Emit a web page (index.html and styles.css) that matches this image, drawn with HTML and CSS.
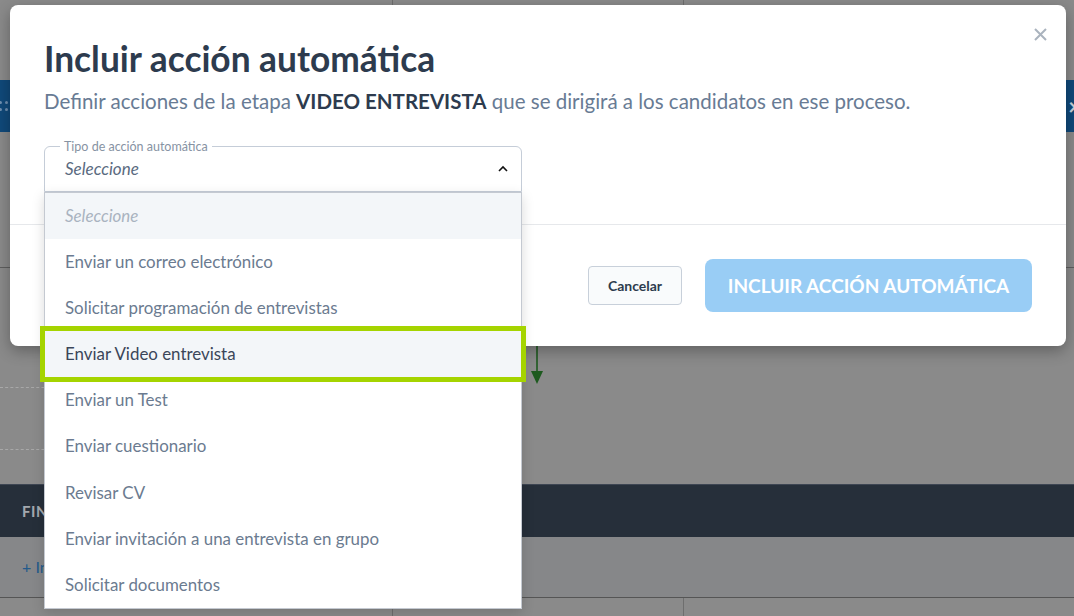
FILE: index.html
```html
<!DOCTYPE html>
<html lang="es">
<head>
    <meta charset="UTF-8">
    <title>Incluir acción automática</title>
    <link rel="stylesheet" href="styles.css">
</head>
<body>
    <div class="page">
        <div class="cols top-strip">
            <div></div><div></div><div></div>
        </div>
        <div class="stage-bar">
            <span class="handle"><i></i><i></i><i></i><i></i><i></i><i></i></span>
            <span class="bar-close">&times;</span>
        </div>
        <div class="canvas">
            <div class="flow-line"></div>
            <div class="dash first"></div>
            <div class="dash"></div>
            <svg class="arrow" width="14" height="60" viewBox="0 0 14 60">
                <line x1="7" y1="0" x2="7" y2="46" stroke="#1d5a1f" stroke-width="1.6"/>
                <polygon points="1,43 13,43 7,56" fill="#1d5a1f"/>
            </svg>
        </div>
        <div class="dark-band">FINALIZADOS</div>
        <div class="actions-row">+ Incluir acción</div>
        <div class="cols bottom-row">
            <div></div><div></div><div></div>
        </div>
    </div>

    <div class="modal">
        <button class="modal-close" aria-label="Cerrar">
            <svg width="13" height="13" viewBox="0 0 13 13">
                <path d="M1 1L12 12M12 1L1 12" stroke="#aab3be" stroke-width="2" fill="none"/>
            </svg>
        </button>
        <div class="modal-body">
            <h1>Incluir acción automática</h1>
            <p class="lead">Definir acciones de la etapa <b>VIDEO ENTREVISTA</b> que se dirigirá a los candidatos en ese proceso.</p>

            <div class="select">
                <fieldset class="select-box">
                    <legend>Tipo de acción automática</legend>
                    <span class="select-value">Seleccione</span>
                    <svg class="chevron" width="10" height="7" viewBox="0 0 10 7">
                        <path d="M1 6L5 2L9 6" stroke="#111" stroke-width="1.6" fill="none"/>
                    </svg>
                </fieldset>
                <ul class="options">
                    <li class="placeholder">Seleccione</li>
                    <li>Enviar un correo electrónico</li>
                    <li>Solicitar programación de entrevistas</li>
                    <li class="marked">Enviar Video entrevista</li>
                    <li>Enviar un Test</li>
                    <li>Enviar cuestionario</li>
                    <li>Revisar CV</li>
                    <li>Enviar invitación a una entrevista en grupo</li>
                    <li>Solicitar documentos</li>
                </ul>
            </div>
        </div>
        <div class="modal-footer">
            <button class="btn-cancel">Cancelar</button>
            <button class="btn-primary">INCLUIR ACCIÓN AUTOMÁTICA</button>
        </div>
    </div>
</body>
</html>
```

FILE: styles.css
```css
body {
    margin: 0;
    width: 1074px;
    height: 616px;
    overflow: hidden;
    position: relative;
    background: #8a8a8a;
    font-family: Lato, "Open Sans", sans-serif;
}
.cols {
    display: grid;
    grid-template-columns: 392px 291px 1fr;
}
.cols div + div {
    border-left: 1px solid #6e6e6e;
}
.top-strip {
    height: 80px;
}
.stage-bar {
    height: 52px;
    background: #10497a;
    display: flex;
    justify-content: space-between;
    align-items: center;
}
.handle {
    display: grid;
    grid-template-columns: repeat(3, 3px);
    gap: 4px 3px;
    margin-left: -1px;
}
.handle i {
    width: 3px;
    height: 3px;
    border-radius: 50%;
    background: #6f8fb0;
}
.bar-close {
    color: #c9d3dd;
    font-size: 22px;
    font-weight: bold;
    margin-right: -7px;
}
.canvas {
    height: 352px;
    box-sizing: border-box;
    padding-top: 135px;
    position: relative;
}
.flow-line {
    border-top: 1px solid #5e5e5e;
}
.dash {
    width: 60px;
    margin-top: 61px;
    border-top: 1px dashed #a8a8a8;
}
.dash.first {
    margin-top: 119px;
}
.arrow {
    position: absolute;
    left: 530px;
    top: 196px;
}
.dark-band {
    height: 52px;
    line-height: 52px;
    background: #262f3a;
    border-top: 1px solid #3e4653;
    padding-left: 22px;
    color: #a3a8ae;
    font-size: 15px;
    font-weight: bold;
    letter-spacing: 0.5px;
}
.actions-row {
    height: 60px;
    line-height: 60px;
    background: #868789;
    padding-left: 22px;
    color: #235a8b;
    font-size: 16px;
}
.bottom-row {
    height: 20px;
    border-top: 1px solid #555;
}

.modal {
    position: absolute;
    left: 10px;
    top: 5px;
    width: 1056px;
    height: 341px;
    background: white;
    border-radius: 8px;
    box-shadow: 0 5px 15px rgba(0, 0, 0, 0.3);
}
.modal-close {
    position: absolute;
    top: 23px;
    right: 19px;
    background: none;
    border: none;
    padding: 0;
}
.modal-body {
    height: 220px;
    padding: 34px 34px 0;
    box-sizing: border-box;
    border-bottom: 1px solid #e6e8eb;
}
h1 {
    margin: 0;
    font-size: 35.3px;
    line-height: 40px;
    color: #2d3b4e;
}
.lead {
    margin: 8px 0 0;
    font-size: 20.5px;
    line-height: 28px;
    color: #687b94;
}
.lead b {
    color: #2d3b4e;
}
.select {
    position: relative;
    width: 478px;
    margin-top: 24px;
}
.select-box {
    margin: 0;
    height: 53px;
    box-sizing: border-box;
    padding: 0 20px;
    border: 1px solid #c5cdd8;
    border-radius: 6px 6px 0 0;
    display: flex;
    align-items: center;
    justify-content: space-between;
}
.select-box legend {
    padding: 0 4px;
    margin-left: -5px;
    font-size: 12.5px;
    color: #8793a3;
}
.select-value {
    font-style: italic;
    font-size: 17px;
    color: #5a6a80;
    margin-top: -8px;
}
.chevron {
    margin-top: -8px;
    margin-right: -7px;
}
.options {
    position: absolute;
    top: 53px;
    left: 0;
    width: 478px;
    box-sizing: border-box;
    margin: 0;
    padding: 0;
    list-style: none;
    background: white;
    border: 1px solid #c4c9d1;
    box-shadow: 0 4px 12px rgba(0, 0, 0, 0.15);
}
.options li {
    height: 46.1px;
    line-height: 46px;
    padding-left: 20px;
    font-size: 16.9px;
    color: #6b7b90;
}
.options .placeholder {
    background: #f3f6f9;
    font-style: italic;
    color: #a9b3c0;
}
.options .marked {
    background: #f3f6f9;
    color: #3b4659;
    outline: 5px solid #a5d400;
}
.modal-footer {
    height: 120px;
    display: flex;
    justify-content: flex-end;
    align-items: center;
    gap: 23px;
    padding-right: 34px;
}
.btn-cancel {
    width: 94px;
    height: 39px;
    background: #f9fbfc;
    border: 1px solid #c8d0da;
    border-radius: 4px;
    font-family: inherit;
    font-size: 14px;
    font-weight: bold;
    color: #2d3b4e;
}
.btn-primary {
    width: 327px;
    height: 53px;
    background: #99cdf5;
    border: none;
    border-radius: 8px;
    font-family: inherit;
    font-size: 19px;
    font-weight: bold;
    color: white;
}
```
